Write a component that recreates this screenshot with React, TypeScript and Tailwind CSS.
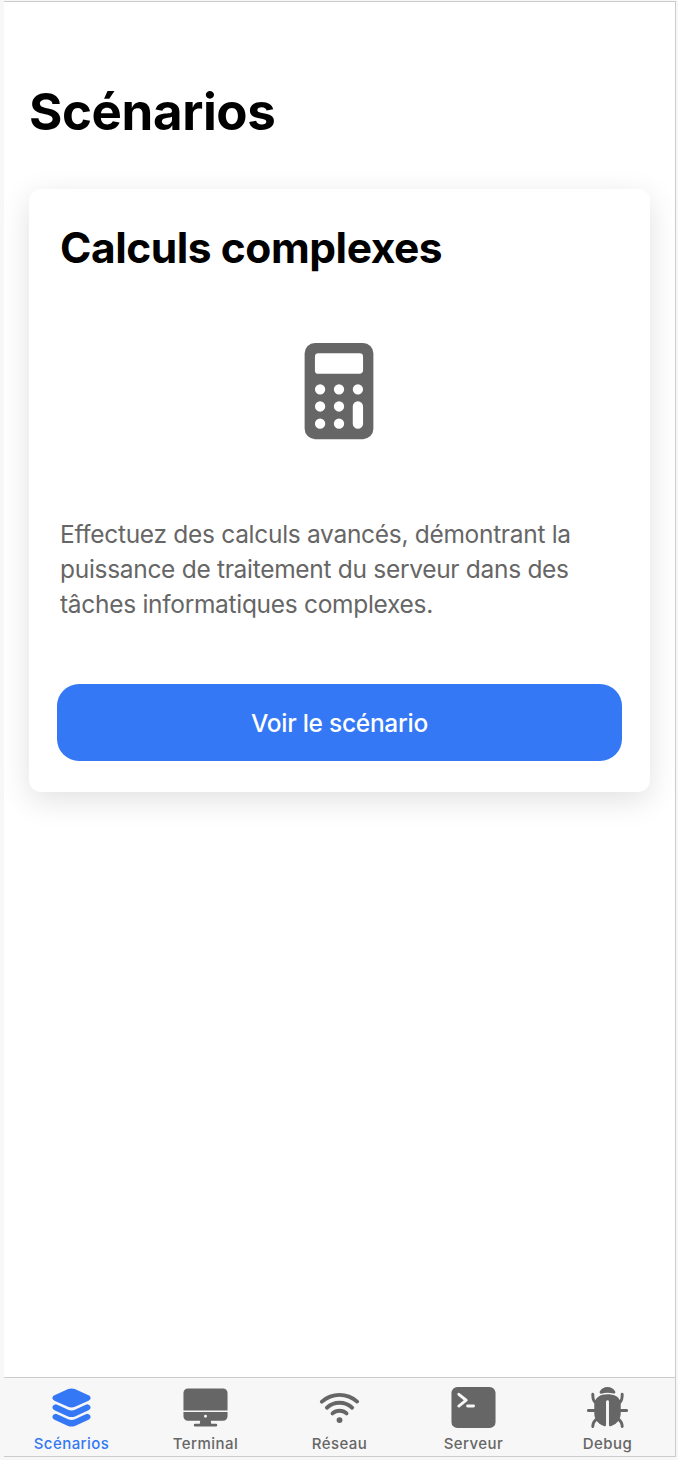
import type { ReactNode } from "react";
import { IoBug, IoCalculator, IoDesktop, IoLayers, IoTerminal, IoWifi } from "react-icons/io5";

type Tab = { label: string; icon: ReactNode; active?: boolean };

const tabs: Tab[] = [
  { label: "Scénarios", icon: <IoLayers size={47} />, active: true },
  { label: "Terminal", icon: <IoDesktop size={47} /> },
  { label: "Réseau", icon: <IoWifi size={47} /> },
  { label: "Serveur", icon: <IoTerminal size={47} /> },
  { label: "Debug", icon: <IoBug size={47} /> },
];

function TabBar() {
  return (
    <nav className="flex h-[79px] shrink-0 border-t border-[#cccccc] bg-[#f7f7f7]">
      {tabs.map((tab) => (
        <button
          key={tab.label}
          className={`flex w-[134px] flex-col items-center ${tab.active ? "text-[#3478f6]" : "text-[#666666]"}`}
        >
          <span className="flex h-[59px] items-center justify-center">{tab.icon}</span>
          <span className="-mt-0.5 pl-px text-[15px] leading-[18px] font-medium tracking-[0.45px]">{tab.label}</span>
        </button>
      ))}
    </nav>
  );
}

function ScenarioCard() {
  return (
    <article className="mx-[25px] mt-[46px] flex h-[603px] flex-col rounded-xl bg-white px-7 shadow-[0_8px_31px_rgba(0,0,0,0.12)]">
      <h2 className="mt-[33px] pl-[3px] text-[42.5px] leading-[52px] font-bold tracking-[-0.46px] text-black">
        Calculs complexes
      </h2>
      <div className="mt-[62px] flex h-[110px] justify-center pr-px text-[#666666]">
        <IoCalculator size={110} />
      </div>
      <p className="mt-[71px] pl-[3px] text-[24.5px] leading-[35px] tracking-[-0.3px] text-[#666666]">
        Effectuez des calculs avancés, démontrant la
        <br />
        puissance de traitement du serveur dans des
        <br />
        tâches informatiques complexes.
      </p>
      <button className="mt-[62px] h-[77px] rounded-[22px] bg-[#3478f6] pt-0.5 text-[24.5px] font-medium tracking-[-0.27px] text-white">
        Voir le scénario
      </button>
    </article>
  );
}

export default function App() {
  return (
    <div className="h-[1460px] w-[678px] bg-[#f7f7f7] pt-px pl-1 font-['Inter','Liberation_Sans',sans-serif]">
      <div className="flex h-[1456px] w-[672px] flex-col overflow-hidden border-t border-r border-b border-[#cccccc] bg-white">
        <main className="flex-1">
          <h1 className="mt-[79px] ml-[25px] text-[51px] leading-[62px] font-bold tracking-[-0.4px] text-black">
            Scénarios
          </h1>
          <ScenarioCard />
        </main>
        <TabBar />
      </div>
    </div>
  );
}
